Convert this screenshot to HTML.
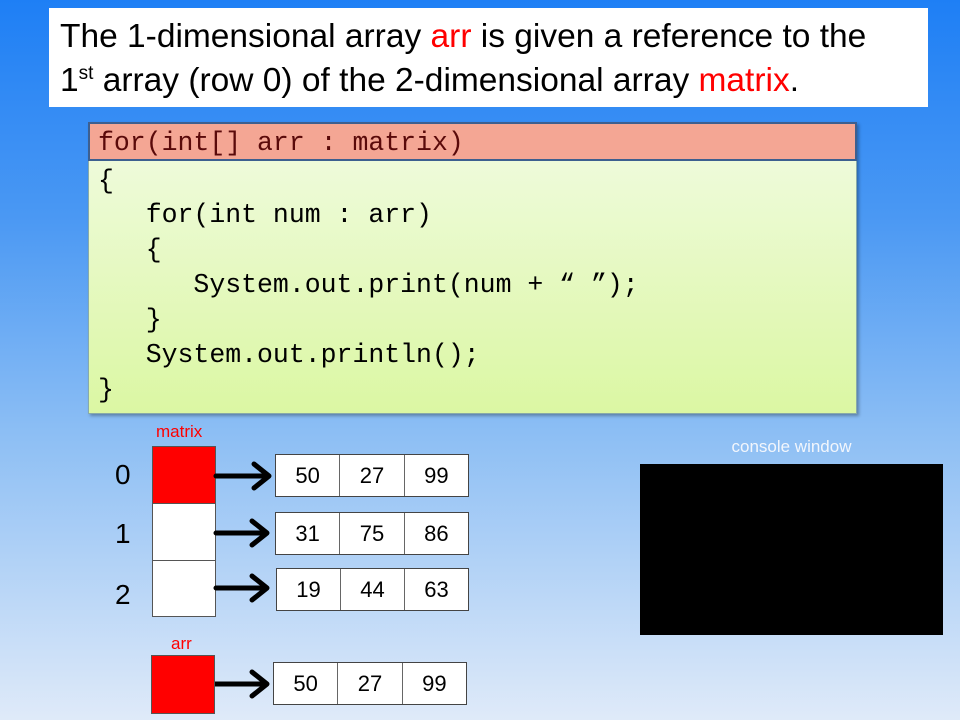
<!DOCTYPE html>
<html><head><style>
body{margin:0;width:960px;height:720px;overflow:hidden;position:relative;font-family:"Liberation Sans",sans-serif;background:linear-gradient(#1e7ff5 0%,#4a98f3 30%,#8cbef4 60%,#dfeaf9 100%);}
.a{position:absolute}
.title{left:49px;top:8px;width:879px;height:99px;background:#fff;font-size:33.5px;line-height:44px;padding:7px 0 0 11px;box-sizing:border-box;color:#000;white-space:nowrap}
.r{color:#f00}
.code{left:88px;top:122px;width:769px;height:292px;border:1px solid #8aa;background:linear-gradient(#f1fbe2,#dbf7a3);box-shadow:2px 2px 3px rgba(0,0,0,.3);box-sizing:border-box}
.hdr{left:88px;top:122px;width:769px;height:39px;background:#f4a694;border:2px solid #3d5f8f;box-sizing:border-box}
.ln{position:absolute;left:98px;font-family:"Liberation Mono",monospace;font-size:26.5px;white-space:pre;line-height:30px}
.cell{position:absolute;background:#fff;border:1px solid #555;box-sizing:border-box}
.arr{position:absolute;display:flex;background:#fff;border:1px solid #444;box-sizing:border-box}
.arr div{flex:1;border-right:1px solid #666;text-align:center;font-size:22px;display:flex;align-items:center;justify-content:center}
.arr div:last-child{border-right:none}
.idx{position:absolute;font-size:28px;left:115px}
.lbl{position:absolute;color:#f00;font-size:17px}
</style></head><body>
<div class="a title">The 1-dimensional array <span class="r">arr</span> is given a reference to the<br>1<sup style="font-size:19px;line-height:0">st</sup> array (row 0) of the 2-dimensional array <span class="r">matrix</span>.</div>
<div class="a code"></div>
<div class="a hdr"></div>
<div class="ln" style="top:128px;color:#5a0a0a">for(int[] arr : matrix)</div>
<div class="ln" style="top:166px">{</div>
<div class="ln" style="top:200px">   for(int num : arr)</div>
<div class="ln" style="top:235px">   {</div>
<div class="ln" style="top:270px">      System.out.print(num + “ ”);</div>
<div class="ln" style="top:305px">   }</div>
<div class="ln" style="top:340px">   System.out.println();</div>
<div class="ln" style="top:375px">}</div>

<div class="lbl" style="left:156px;top:422px">matrix</div>
<div class="cell" style="left:152px;top:446px;width:64px;height:58px;background:#f00"></div>
<div class="cell" style="left:152px;top:503px;width:64px;height:58px"></div>
<div class="cell" style="left:152px;top:560px;width:64px;height:57px"></div>
<div class="idx" style="top:459px">0</div>
<div class="idx" style="top:518px">1</div>
<div class="idx" style="top:579px">2</div>

<svg class="a" style="left:0;top:0" width="960" height="720">
<g stroke="#000" stroke-width="5" fill="none" stroke-linecap="round" stroke-linejoin="round">
<path d="M216 476H268M254 464L269 476L254 488"/>
<path d="M216 533H266M252 521L267 533L252 545"/>
<path d="M216 588H266M252 576L267 588L252 600"/>
<path d="M214 684H266M252 672L267 684L252 696"/>
</g></svg>

<div class="arr" style="left:275px;top:454px;width:194px;height:43px"><div>50</div><div>27</div><div>99</div></div>
<div class="arr" style="left:275px;top:512px;width:194px;height:43px"><div>31</div><div>75</div><div>86</div></div>
<div class="arr" style="left:276px;top:568px;width:193px;height:43px"><div>19</div><div>44</div><div>63</div></div>

<div class="lbl" style="left:171px;top:634px">arr</div>
<div class="cell" style="left:151px;top:655px;width:64px;height:59px;background:#f00"></div>
<div class="arr" style="left:273px;top:662px;width:194px;height:43px"><div>50</div><div>27</div><div>99</div></div>

<div class="a" style="left:640px;top:437px;width:303px;text-align:center;color:#f2f6fc;font-size:17px">console window</div>
<div class="a" style="left:640px;top:464px;width:303px;height:171px;background:#000"></div>
</body></html>
